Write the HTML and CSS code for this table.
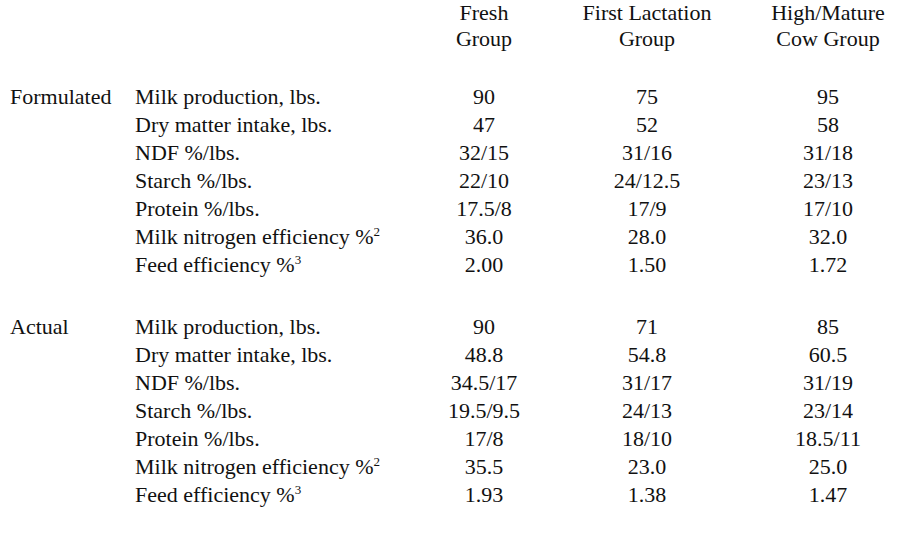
FILE: index.html
```html
<!DOCTYPE html>
<html lang="en">
<head>
<meta charset="utf-8">
<title>Group rations</title>
<link rel="stylesheet" href="styles.css">
</head>
<body>
<div class="sheet">
  <div class="row head">
    <div class="c1"></div>
    <div class="c2"></div>
    <div class="c3">Fresh<br>Group</div>
    <div class="c4">First Lactation<br>Group</div>
    <div class="c5">High/Mature<br>Cow Group</div>
  </div>

  <div class="section first">
    <div class="row"><div class="c1">Formulated</div><div class="c2">Milk production, lbs.</div><div class="c3">90</div><div class="c4">75</div><div class="c5">95</div></div>
    <div class="row"><div class="c1"></div><div class="c2">Dry matter intake, lbs.</div><div class="c3">47</div><div class="c4">52</div><div class="c5">58</div></div>
    <div class="row"><div class="c1"></div><div class="c2">NDF %/lbs.</div><div class="c3">32/15</div><div class="c4">31/16</div><div class="c5">31/18</div></div>
    <div class="row"><div class="c1"></div><div class="c2">Starch %/lbs.</div><div class="c3">22/10</div><div class="c4">24/12.5</div><div class="c5">23/13</div></div>
    <div class="row"><div class="c1"></div><div class="c2">Protein %/lbs.</div><div class="c3">17.5/8</div><div class="c4">17/9</div><div class="c5">17/10</div></div>
    <div class="row"><div class="c1"></div><div class="c2">Milk nitrogen efficiency %<sup>2</sup></div><div class="c3">36.0</div><div class="c4">28.0</div><div class="c5">32.0</div></div>
    <div class="row"><div class="c1"></div><div class="c2">Feed efficiency %<sup>3</sup></div><div class="c3">2.00</div><div class="c4">1.50</div><div class="c5">1.72</div></div>
  </div>

  <div class="section second">
    <div class="row"><div class="c1">Actual</div><div class="c2">Milk production, lbs.</div><div class="c3">90</div><div class="c4">71</div><div class="c5">85</div></div>
    <div class="row"><div class="c1"></div><div class="c2">Dry matter intake, lbs.</div><div class="c3">48.8</div><div class="c4">54.8</div><div class="c5">60.5</div></div>
    <div class="row"><div class="c1"></div><div class="c2">NDF %/lbs.</div><div class="c3">34.5/17</div><div class="c4">31/17</div><div class="c5">31/19</div></div>
    <div class="row"><div class="c1"></div><div class="c2">Starch %/lbs.</div><div class="c3">19.5/9.5</div><div class="c4">24/13</div><div class="c5">23/14</div></div>
    <div class="row"><div class="c1"></div><div class="c2">Protein %/lbs.</div><div class="c3">17/8</div><div class="c4">18/10</div><div class="c5">18.5/11</div></div>
    <div class="row"><div class="c1"></div><div class="c2">Milk nitrogen efficiency %<sup>2</sup></div><div class="c3">35.5</div><div class="c4">23.0</div><div class="c5">25.0</div></div>
    <div class="row"><div class="c1"></div><div class="c2">Feed efficiency %<sup>3</sup></div><div class="c3">1.93</div><div class="c4">1.38</div><div class="c5">1.47</div></div>
  </div>
</div>
</body>
</html>
```

FILE: styles.css
```css
html, body {
  margin: 0;
  padding: 0;
  background: #ffffff;
}

body {
  font-family: "Liberation Serif", "Times New Roman", serif;
  font-size: 22px;
  color: #111111;
  overflow: hidden;
}

.sheet {
  padding-left: 10px;
  width: 890px;
}

.row {
  display: grid;
  grid-template-columns: 125px 279px 140px 186px 160px;
  line-height: 28px;
  white-space: nowrap;
}

.head {
  line-height: 26px;
}

.c3, .c4, .c5 {
  text-align: center;
}

.c5 {
  padding-left: 16px;
}

.section.first {
  margin-top: 31px;
}

.section.second {
  margin-top: 34px;
}

sup {
  font-size: 13px;
  line-height: 0;
  vertical-align: 8px;
}
```
